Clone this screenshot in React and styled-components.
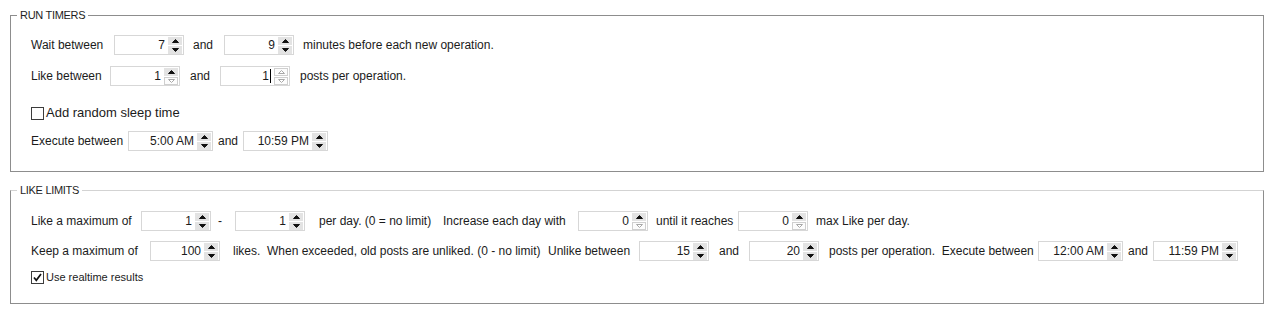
import React from "react";
import styled, { createGlobalStyle } from "styled-components";

const GlobalStyle = createGlobalStyle`
  html, body {
    margin: 0;
    padding: 0;
    background: #ffffff;
  }
  body {
    font-family: "Liberation Sans", Arial, sans-serif;
    font-size: 12px;
    color: #1b1b1b;
  }
`;

const Page = styled.div`
  width: 1287px;
  height: 314px;
  padding-top: 9px;
  box-sizing: border-box;
  overflow: hidden;
`;

const Group = styled.fieldset`
  margin: ${(p) => p.$mt || 0}px 0 0 10px;
  width: 1254px;
  box-sizing: border-box;
  padding: 0 0 ${(p) => p.$pb}px 20px;
  border: 1px solid #8d8d8d;
  border-top-color: ${(p) => p.$topColor || "#8d8d8d"};
  min-width: 0;

  legend {
    margin-left: -14px;
    padding: 0 3px;
    font-size: 11px;
    line-height: 13px;
    letter-spacing: -0.3px;
    color: #1e1e1e;
  }
`;

const Row = styled.div`
  display: flex;
  align-items: center;
  height: 20px;
  margin-top: ${(p) => p.$mt}px;
`;

const Text = styled.span`
  flex: none;
  white-space: pre;
  width: ${(p) => (p.$w ? `${p.$w}px` : "auto")};
  margin-left: ${(p) => p.$ml || 0}px;
  font-size: ${(p) => p.$size || 12}px;
  line-height: 20px;
  color: #1b1b1b;
`;

const SpinBox = styled.div`
  flex: none;
  width: ${(p) => p.$w}px;
  height: 20px;
  box-sizing: border-box;
  border: 1px solid #d7d7d7;
  background: #fff;
  display: flex;
  align-items: center;
  padding: 0 1px 0 4px;
`;

const SpinValue = styled.span`
  flex: 1;
  text-align: right;
  font-size: 12px;
  line-height: 18px;
  padding-right: 3px;
  color: #1b1b1b;
  display: flex;
  justify-content: flex-end;
  align-items: center;
`;

const Caret = styled.i`
  display: inline-block;
  width: 1px;
  height: 14px;
  background: #000;
  margin-left: 1px;
`;

const Buttons = styled.div`
  display: flex;
  flex-direction: column;
  gap: 1px;
  width: 14px;
`;

const SpinButton = styled.div`
  height: 8px;
  box-sizing: border-box;
  background: ${(p) => (p.$disabled ? "#fcfcfc" : "#e3e3e3")};
  border: 1px solid ${(p) => (p.$disabled ? "#cfcfcf" : "#e3e3e3")};
  display: flex;
  align-items: center;
  justify-content: center;
`;

const Check = styled.span`
  flex: none;
  width: 13px;
  height: 13px;
  box-sizing: border-box;
  border: 1px solid #3c3c3c;
  background: #fff;
  display: flex;
  align-items: center;
  justify-content: center;
`;

const Arrow = ({ up, disabled }) => (
  <svg width="7" height="4" viewBox="0 0 7 4">
    <path
      d={up ? "M0.5 3.5 L3.5 0.5 L6.5 3.5 Z" : "M0.5 0.5 L3.5 3.5 L6.5 0.5 Z"}
      fill={disabled ? "#fff" : "#111"}
      stroke={disabled ? "#a8a8a8" : "#111"}
      strokeWidth="1"
      strokeLinejoin="round"
    />
  </svg>
);

const Spinner = ({ value, w = 70, upOff, downOff, caret }) => (
  <SpinBox $w={w}>
    <SpinValue>
      {value}
      {caret && <Caret />}
    </SpinValue>
    <Buttons>
      <SpinButton $disabled={upOff}>
        <Arrow up disabled={upOff} />
      </SpinButton>
      <SpinButton $disabled={downOff}>
        <Arrow disabled={downOff} />
      </SpinButton>
    </Buttons>
  </SpinBox>
);

const CheckBox = ({ checked }) => (
  <Check>
    {checked && (
      <svg width="11" height="11" viewBox="0 0 11 11">
        <path d="M2 5.5 L4.3 8.3 L9 2" fill="none" stroke="#111" strokeWidth="1.7" />
      </svg>
    )}
  </Check>
);

export default function App() {
  return (
    <Page>
      <GlobalStyle />
      <Group $pb={20}>
        <legend>RUN TIMERS</legend>
        <Row $mt={13}>
          <Text $w={83}>Wait between</Text>
          <Spinner value="7" />
          <Text $ml={9} $w={31}>and</Text>
          <Spinner value="9" />
          <Text $ml={9}>minutes before each new operation.</Text>
        </Row>
        <Row $mt={11}>
          <Text $w={79}>Like between</Text>
          <Spinner value="1" downOff />
          <Text $ml={10} $w={30}>and</Text>
          <Spinner value="1" upOff downOff caret />
          <Text $ml={10}>posts per operation.</Text>
        </Row>
        <Row $mt={17}>
          <CheckBox />
          <Text $ml={2} $size={13}>Add random sleep time</Text>
        </Row>
        <Row $mt={8}>
          <Text $w={97}>Execute between</Text>
          <Spinner value="5:00 AM" w={85} />
          <Text $ml={5} $w={25}>and</Text>
          <Spinner value="10:59 PM" w={85} />
        </Row>
      </Group>

      <Group $mt={12} $pb={16} $topColor="#d3d3d3">
        <legend>LIKE LIMITS</legend>
        <Row $mt={14}>
          <Text $w={110}>Like a maximum of</Text>
          <Spinner value="1" />
          <Text $ml={7} $w={17}>-</Text>
          <Spinner value="1" />
          <Text $ml={14} $w={124}>per day. (0 = no limit)</Text>
          <Text $w={135}>Increase each day with</Text>
          <Spinner value="0" downOff />
          <Text $ml={8} $w={82}>until it reaches</Text>
          <Spinner value="0" downOff />
          <Text $ml={8}>max Like per day.</Text>
        </Row>
        <Row $mt={10}>
          <Text $w={119}>Keep a maximum of</Text>
          <Spinner value="100" />
          <Text $ml={13} $w={315}>likes.  When exceeded, old posts are unliked. (0 - no limit)</Text>
          <Text $w={91}>Unlike between</Text>
          <Spinner value="15" />
          <Text $ml={10} $w={30}>and</Text>
          <Spinner value="20" />
          <Text $ml={10} $w={209}>posts per operation.  Execute between</Text>
          <Spinner value="12:00 AM" w={85} />
          <Text $ml={5} $w={25}>and</Text>
          <Spinner value="11:59 PM" w={85} />
        </Row>
        <Row $mt={6}>
          <CheckBox checked />
          <Text $ml={2} $size={11}>Use realtime results</Text>
        </Row>
      </Group>
    </Page>
  );
}
